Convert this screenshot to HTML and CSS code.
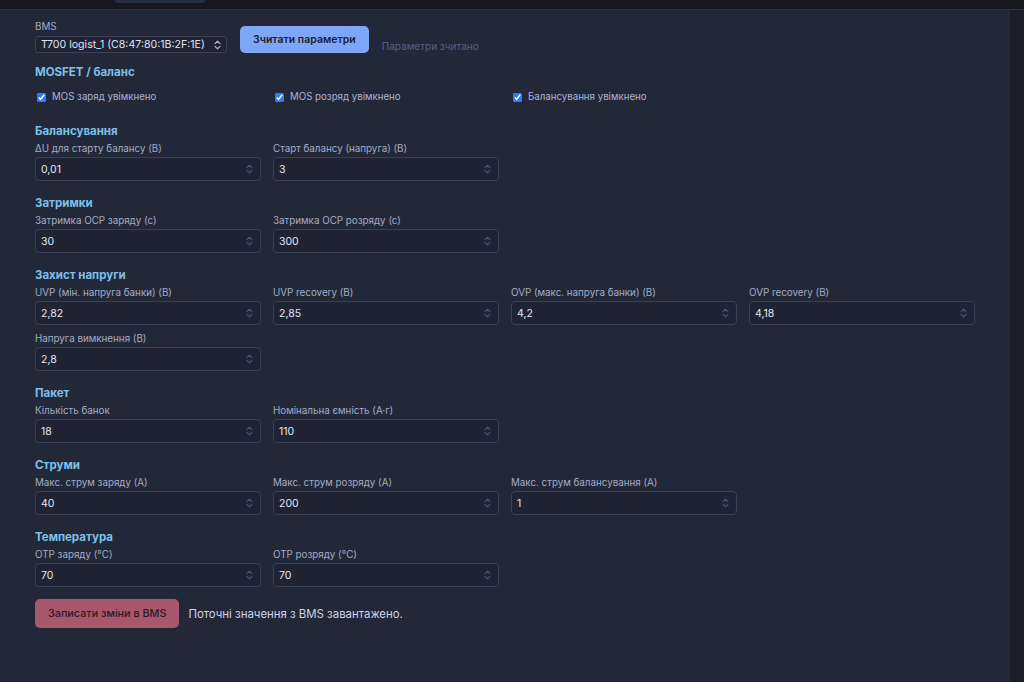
FILE: index.html
```html
<!DOCTYPE html>
<html lang="uk">
<head>
    <meta charset="UTF-8">
    <meta name="viewport" content="width=device-width, initial-scale=1.0">
    <title>BMS параметри</title>
    <link rel="stylesheet" href="styles.css">
</head>
<body>

<div class="topbar">
    <div class="tab"></div>
</div>

<div class="layout">
  <div class="panel">

    <div class="toolbar">
        <div class="field">
            <label>BMS</label>
            <div class="select-box">
                <select id="bmsSelect">
                    <option>T700 logist_1 (C8:47:80:1B:2F:1E)</option>
                </select>
                <svg class="chev light" width="7" height="10" viewBox="0 0 7 10"><path d="M1 3.6 3.5 1.2 6 3.6M1 6.4 3.5 8.8 6 6.4" fill="none" stroke="currentColor" stroke-width="1.2" stroke-linecap="round" stroke-linejoin="round"/></svg>
            </div>
        </div>
        <button class="btn-read" type="button">Зчитати параметри</button>
        <span class="read-status">Параметри зчитано</span>
    </div>

    <section class="group">
        <h2>MOSFET / баланс</h2>
        <div class="grid checks">
            <label class="check"><input type="checkbox" checked> MOS заряд увімкнено</label>
            <label class="check"><input type="checkbox" checked> MOS розряд увімкнено</label>
            <label class="check"><input type="checkbox" checked> Балансування увімкнено</label>
        </div>
    </section>

    <div id="groups"></div>

    <div class="actions">
        <button class="btn-write" type="button">Записати зміни в BMS</button>
        <span class="write-status">Поточні значення з BMS завантажено.</span>
    </div>

  </div>
  <div class="side"></div>
</div>

<script>
    const groups = [
        { title: 'Балансування', fields: [
            ['ΔU для старту балансу (В)', '0,01'],
            ['Старт балансу (напруга) (В)', '3']
        ]},
        { title: 'Затримки', fields: [
            ['Затримка OCP заряду (с)', '30'],
            ['Затримка OCP розряду (с)', '300']
        ]},
        { title: 'Захист напруги', fields: [
            ['UVP (мін. напруга банки) (В)', '2,82'],
            ['UVP recovery (В)', '2,85'],
            ['OVP (макс. напруга банки) (В)', '4,2'],
            ['OVP recovery (В)', '4,18'],
            ['Напруга вимкнення (В)', '2,8']
        ]},
        { title: 'Пакет', fields: [
            ['Кількість банок', '18'],
            ['Номінальна ємність (А·г)', '110']
        ]},
        { title: 'Струми', fields: [
            ['Макс. струм заряду (А)', '40'],
            ['Макс. струм розряду (А)', '200'],
            ['Макс. струм балансування (А)', '1']
        ]},
        { title: 'Температура', fields: [
            ['OTP заряду (°C)', '70'],
            ['OTP розряду (°C)', '70']
        ]}
    ];

    const spinner = '<svg class="chev" width="7" height="10" viewBox="0 0 7 10"><path d="M1 3.6 3.5 1.2 6 3.6M1 6.4 3.5 8.8 6 6.4" fill="none" stroke="currentColor" stroke-width="1.2" stroke-linecap="round" stroke-linejoin="round"/></svg>';

    function renderGroups() {
        const root = document.getElementById('groups');
        groups.forEach(group => {
            const section = document.createElement('section');
            section.classList.add('group');
            const fields = group.fields.map(([label, value]) => `
                <div class="field">
                    <label>${label}</label>
                    <div class="num-box">
                        <input type="text" value="${value}">
                        ${spinner}
                    </div>
                </div>
            `).join('');
            section.innerHTML = `<h2>${group.title}</h2><div class="grid">${fields}</div>`;
            root.appendChild(section);
        });
    }

    renderGroups();
</script>

</body>
</html>
```

FILE: styles.css
```css
body {
    margin: 0;
    background-color: #18191e;
    font-family: Inter, "Noto Sans", sans-serif;
    color: #c8cfec;
    height: 100vh;
    overflow: hidden;
}
.topbar {
    height: 9px;
    background-color: #17181d;
    border-bottom: 1px solid #2b3043;
}
.tab {
    margin-left: 115px;
    width: 90px;
    height: 3px;
    background-color: #272d40;
    border-radius: 0 0 4px 4px;
}
.layout {
    display: flex;
    height: 672px;
}
.panel {
    flex: 1;
    background-color: #232839;
    padding: 11px 35px 0;
}
.side {
    width: 14px;
    background-color: #1d1d28;
}
.toolbar {
    display: flex;
    align-items: flex-end;
    gap: 13px;
    margin-bottom: 12px;
}
.field {
    display: flex;
    flex-direction: column;
    gap: 2px;
}
.field label {
    font-size: 9.8px;
    line-height: 12px;
    color: #a3abc6;
}
.toolbar .field {
    gap: 3px;
}
.select-box {
    display: flex;
    align-items: center;
    width: 190px;
    height: 15px;
    border: 1px solid #3b4159;
    border-radius: 3px;
    background-color: #1f2334;
}
.select-box select {
    flex: 1;
    min-width: 0;
    appearance: none;
    background: transparent;
    border: none;
    color: #dfe3f5;
    font-family: inherit;
    font-size: 10.6px;
    padding: 0 0 0 5px;
    outline: none;
}
.chev {
    color: #4a5171;
    margin-right: 6px;
    flex-shrink: 0;
}
.chev.light {
    color: #a9b1d6;
    margin-right: 5px;
}
.btn-read {
    height: 27px;
    padding: 0 13px;
    background-color: #7ea6f6;
    color: #1a1d2c;
    border: none;
    border-radius: 5px;
    font-family: inherit;
    font-size: 10.5px;
    font-weight: 600;
}
.read-status {
    font-size: 10px;
    line-height: 12px;
    color: #586082;
    margin-bottom: 1px;
}
.group {
    margin-bottom: 15px;
}
.group h2 {
    margin: 0 0 5px;
    font-size: 11.5px;
    line-height: 14px;
    font-weight: 700;
    color: #7cc0ea;
}
.grid {
    display: grid;
    grid-template-columns: repeat(4, 226px);
    column-gap: 12px;
    row-gap: 8px;
}
.checks {
    margin-top: 12px;
    margin-bottom: 21px;
}
.check {
    display: flex;
    align-items: center;
    gap: 6px;
    padding-left: 2px;
    font-size: 9.7px;
    line-height: 12px;
    color: #aab2d3;
}
.check input {
    width: 9px;
    height: 9px;
    margin: 0;
    accent-color: #2f7df5;
}
.num-box {
    display: flex;
    align-items: center;
    height: 22px;
    border: 1px solid #393f57;
    border-radius: 4px;
    background-color: #1f2334;
}
.num-box input {
    flex: 1;
    min-width: 0;
    background: transparent;
    border: none;
    outline: none;
    color: #e2e6f6;
    font-family: inherit;
    font-size: 10.5px;
    padding: 0 5px;
}
.num-box .chev {
    margin-right: 7px;
}
.actions {
    display: flex;
    align-items: center;
    gap: 9px;
    margin-top: -3px;
}
.btn-write {
    height: 29px;
    padding: 0 13px;
    background-color: #a8576c;
    color: #2e1a25;
    border: none;
    border-radius: 5px;
    font-family: inherit;
    font-size: 10.8px;
    font-weight: 500;
}
.write-status {
    font-size: 11.4px;
    color: #cdd3ee;
}
```
